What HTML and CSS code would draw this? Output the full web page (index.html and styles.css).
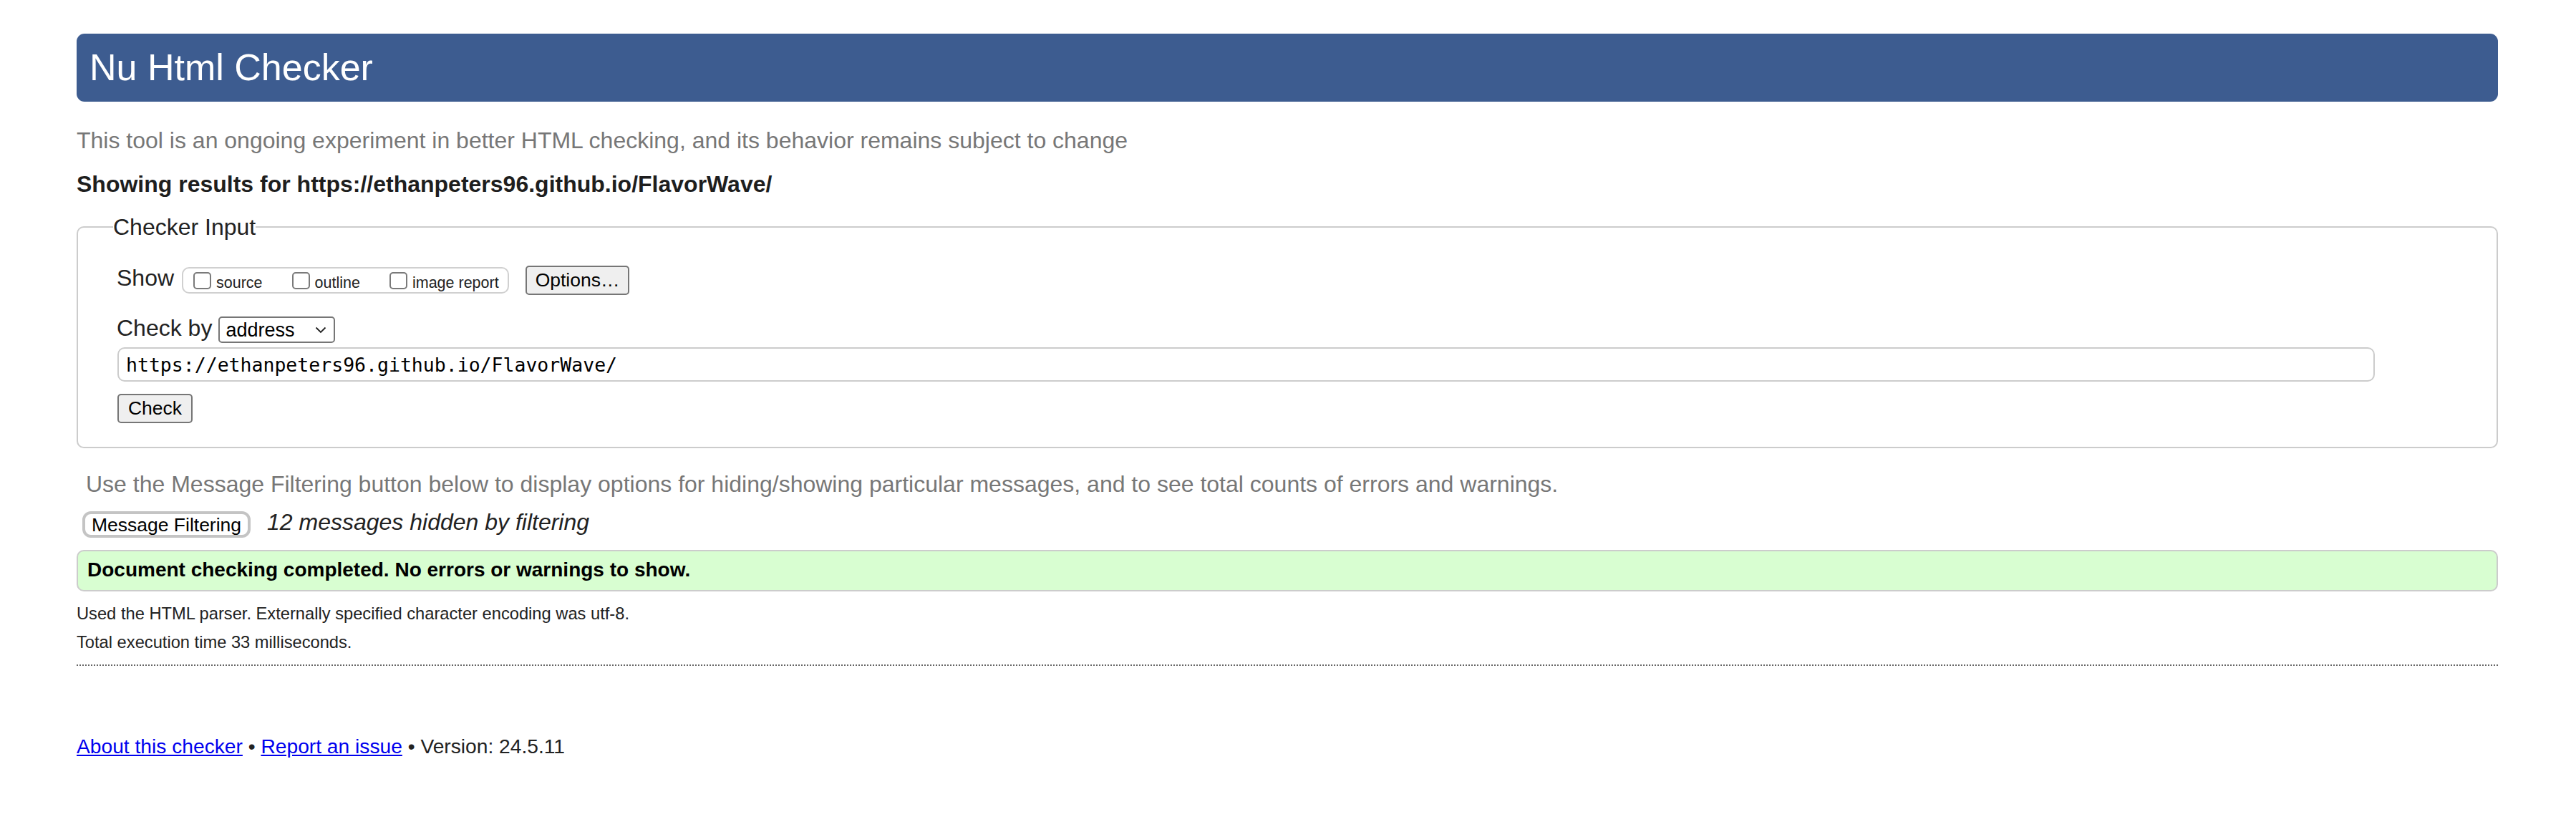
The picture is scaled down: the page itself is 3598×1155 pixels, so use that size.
FILE: index.html
```html
<!DOCTYPE html>
<html lang="en">
<head>
<meta charset="utf-8">
<title>Showing results for https://ethanpeters96.github.io/FlavorWave/ - Nu Html Checker</title>
<link rel="stylesheet" href="styles.css">
</head>
<body>
<h1 class="bar">Nu Html Checker</h1>
<p class="intro">This tool is an ongoing experiment in better HTML checking, and its behavior remains subject to change</p>
<p class="results-for">Showing results for https://ethanpeters96.github.io/FlavorWave/</p>
<form class="checker-form">
  <fieldset class="checker">
    <legend class="checker-legend">Checker Input</legend>
    <div class="show-row">
      <span class="row-label">Show</span>
      <span class="show-options">
        <label class="opt"><input class="cb" type="checkbox"><span class="opt-text">source</span></label>
        <label class="opt"><input class="cb" type="checkbox"><span class="opt-text">outline</span></label>
        <label class="opt"><input class="cb" type="checkbox"><span class="opt-text">image report</span></label>
      </span>
      <button type="button" class="btn options-btn">Options…</button>
    </div>
    <div class="checkby-row">
      <span class="row-label">Check by</span>
      <span class="select-wrap">
        <select class="checkby-select"><option>address</option></select>
        <svg class="chev" width="16" height="10" viewBox="0 0 16 10"><path d="M1.5 1.5 L8 8 L14.5 1.5" fill="none" stroke="#222" stroke-width="1.8"/></svg>
      </span>
    </div>
    <input class="url-input" type="url" value="https://ethanpeters96.github.io/FlavorWave/">
    <div class="submit-row"><button type="button" class="btn check-btn">Check</button></div>
  </fieldset>
</form>
<p class="filter-note">Use the Message Filtering button below to display options for hiding/showing particular messages, and to see total counts of errors and warnings.</p>
<div class="filter-row">
  <button type="button" class="filter-btn">Message Filtering</button>
  <span class="hidden-count">12 messages hidden by filtering</span>
</div>
<div class="success">Document checking completed. No errors or warnings to show.</div>
<p class="details">Used the HTML parser. Externally specified character encoding was utf-8.</p>
<p class="details details-second">Total execution time 33 milliseconds.</p>
<hr class="sep">
<p class="footer"><a href="#">About this checker</a> • <a href="#">Report an issue</a> • Version: 24.5.11</p>
</body>
</html>
```
FILE: styles.css
```css
html, body {
  background: #ffffff;
}
body {
  margin: 0;
  padding: 47px 109px 0 107px;
  font-family: "Liberation Sans", Arial, Helvetica, sans-serif;
  font-size: 32px;
  color: #222222;
}
.bar {
  margin: 0;
  height: 95px;
  line-height: 95px;
  padding: 0 18px;
  font-size: 52px;
  font-weight: normal;
  color: #ffffff;
  background: #3d5c90;
  border-radius: 11px;
}
.intro {
  margin: 34px 0 0 0;
  line-height: 40px;
  color: #777777;
}
.results-for {
  margin: 21px 0 0 0;
  line-height: 40px;
  font-weight: bold;
  color: #1e1e1e;
}
.checker-form {
  margin: 20px 0 0 0;
}
.checker {
  margin: 0;
  border: 2px solid #cccccc;
  border-radius: 10px;
  padding: 34px 20px 33px 55px;
  min-width: 0;
}
.checker-legend {
  padding: 0;
  margin-left: -6px;
  line-height: 40px;
  color: #222222;
}
.show-row {
  display: flex;
  align-items: flex-start;
  height: 41px;
}
.row-label {
  line-height: 34px;
  margin-left: -1px;
}
.show-options {
  display: flex;
  align-items: center;
  box-sizing: border-box;
  height: 37px;
  margin: 2px 0 0 11px;
  padding: 0 12px 0 14px;
  border: 2px solid #d0d0d0;
  border-radius: 10px;
}
.opt {
  display: flex;
  align-items: center;
  font-size: 21.5px;
  color: #222222;
}
.opt + .opt {
  margin-left: 41px;
}
.cb {
  -webkit-appearance: none;
  appearance: none;
  box-sizing: border-box;
  width: 25px;
  height: 24px;
  margin: 0 7px 0 0;
  border: 2px solid #7a7a7a;
  border-radius: 5px;
  background: #ffffff;
}
.opt-text {
  line-height: 24px;
  padding-top: 6px;
}
.btn {
  box-sizing: border-box;
  font-family: "Liberation Sans", Arial, Helvetica, sans-serif;
  font-size: 26.5px;
  color: #000000;
  background: #efefef;
  border: 2px solid #767676;
  border-radius: 5px;
  padding: 0 12px;
}
.options-btn {
  height: 41px;
  margin-left: 23px;
}
.checkby-row {
  display: flex;
  align-items: flex-start;
  margin-top: 29px;
}
.select-wrap {
  position: relative;
  margin: 1px 0 0 9px;
  display: block;
}
.checkby-select {
  -webkit-appearance: none;
  appearance: none;
  box-sizing: border-box;
  display: block;
  width: 163px;
  height: 37px;
  padding: 0 0 0 8px;
  font-family: "Liberation Sans", Arial, Helvetica, sans-serif;
  font-size: 27px;
  color: #000000;
  background: #ffffff;
  border: 2px solid #767676;
  border-radius: 5px;
}
.chev {
  position: absolute;
  right: 12px;
  top: 14px;
  pointer-events: none;
}
.url-input {
  display: block;
  box-sizing: border-box;
  width: 3153px;
  height: 48px;
  margin-top: 6px;
  padding: 0 10px;
  font-family: "DejaVu Sans Mono", "Liberation Mono", monospace;
  font-size: 26.5px;
  color: #000000;
  border: 2px solid #cccccc;
  border-radius: 10px;
  background: #ffffff;
  outline: none;
}
.submit-row {
  margin-top: 17px;
  height: 41px;
}
.check-btn {
  height: 41px;
  width: 105px;
  padding: 0;
}
.filter-note {
  margin: 30px 0 0 0;
  padding-left: 13px;
  line-height: 40px;
  color: #777777;
}
.filter-row {
  display: flex;
  align-items: flex-start;
  margin-top: 18px;
  padding-left: 8px;
}
.filter-btn {
  box-sizing: border-box;
  height: 37px;
  width: 235px;
  padding: 0;
  font-family: "Liberation Sans", Arial, Helvetica, sans-serif;
  font-size: 26.5px;
  color: #000000;
  background: #ffffff;
  border: 4px solid #c4c4c4;
  border-radius: 12px;
}
.hidden-count {
  margin-left: 23px;
  line-height: 30px;
  font-style: italic;
  color: #222222;
}
.success {
  margin-top: 17px;
  box-sizing: border-box;
  height: 58px;
  padding: 11px 13px 0 13px;
  line-height: 30px;
  font-size: 28px;
  font-weight: bold;
  color: #000000;
  background: #d8fed1;
  border: 2px solid #cccccc;
  border-radius: 10px;
}
.details {
  margin: 18px 0 0 0;
  line-height: 26px;
  font-size: 23.7px;
  color: #222222;
}
.details-second {
  margin-top: 14px;
}
.sep {
  margin: 18px 0 0 0;
  height: 0;
  border: 0;
  border-top: 2px dotted #666666;
}
.footer {
  margin: 96px 0 0 0;
  line-height: 32px;
  font-size: 28.2px;
  color: #222222;
}
.footer a {
  color: #0000ee;
}
```
